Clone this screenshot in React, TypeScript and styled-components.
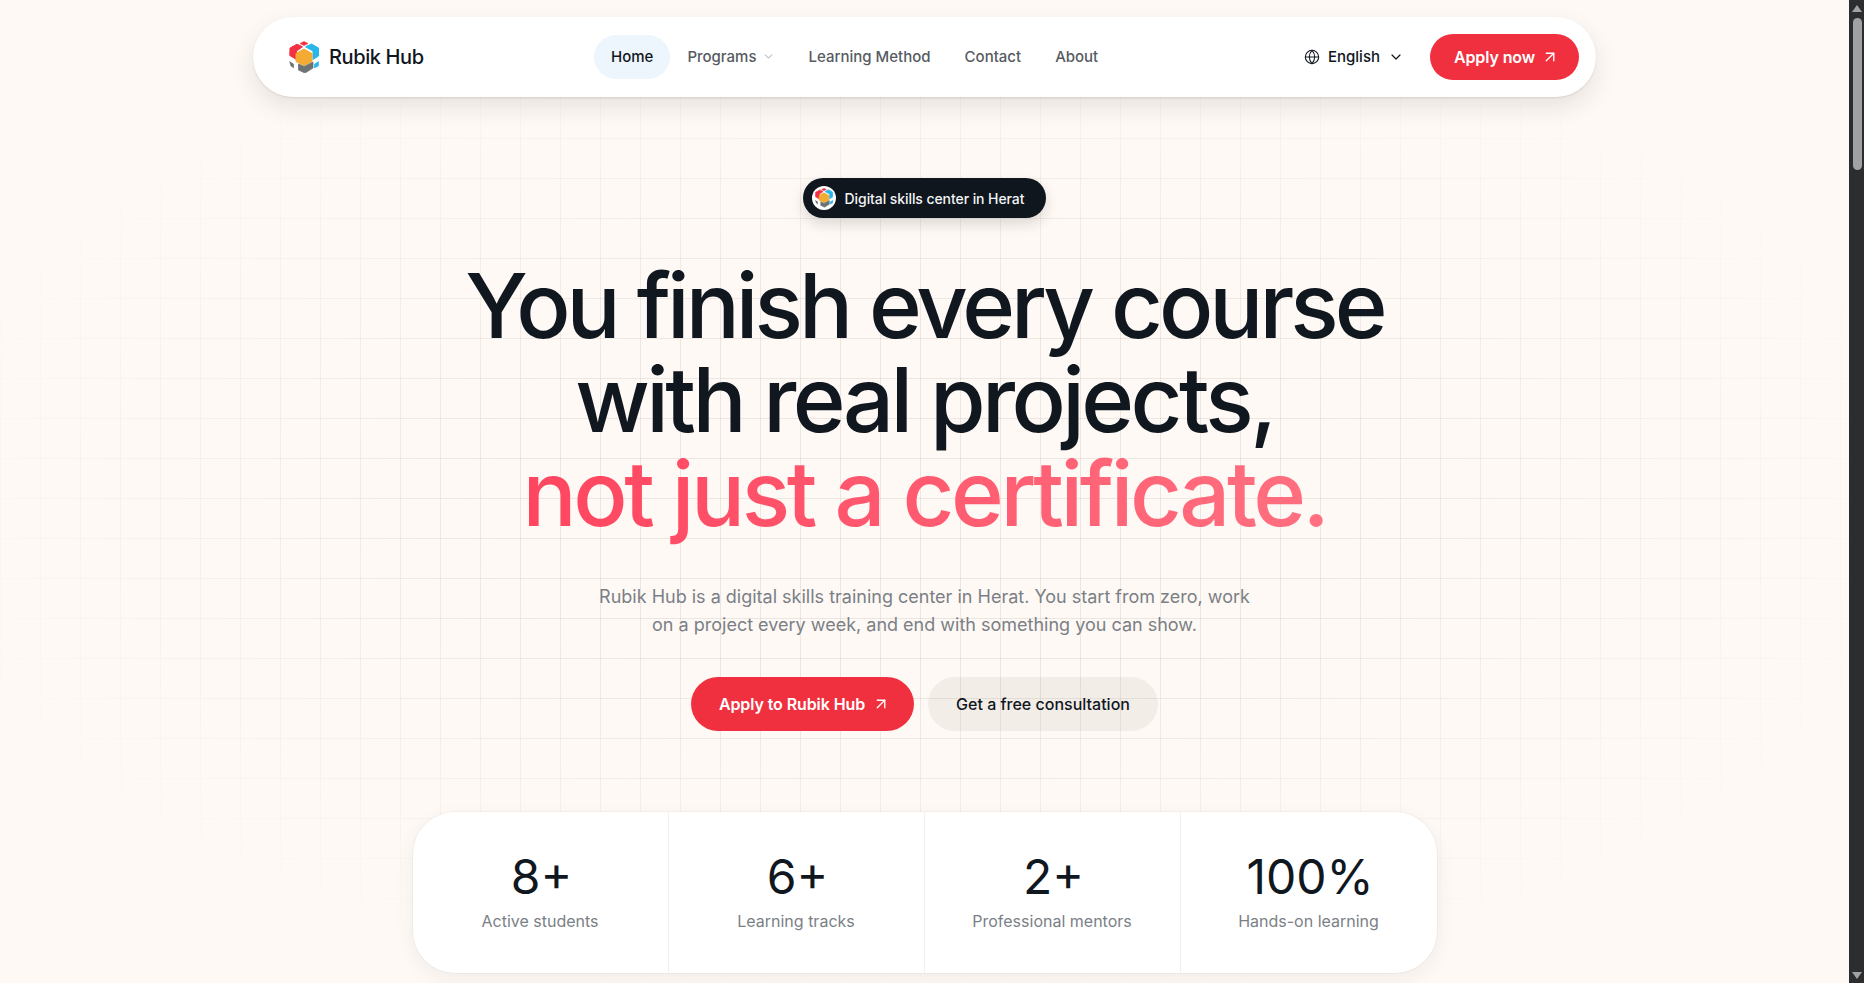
import React from "react";
import styled, { createGlobalStyle } from "styled-components";
import { ArrowUpRight, ChevronDown, Globe } from "lucide-react";

const Global = createGlobalStyle`
  html, body { margin: 0; padding: 0; height: 983px; overflow: hidden; background: #fef9f5; }
  * { box-sizing: border-box; }
  body { font-family: Inter, "Noto Sans", "Liberation Sans", sans-serif; }
`;

const Shell = styled.div`
  display: flex;
  width: 1864px;
  height: 983px;
  overflow: hidden;
`;

const Page = styled.main`
  position: relative;
  flex: 1;
  display: flex;
  flex-direction: column;
  align-items: center;
  padding-top: 17px;
  overflow: hidden;
  background: #fef9f5;
  &::before {
    content: "";
    position: absolute;
    left: 0;
    right: 0;
    top: 18px;
    height: 960px;
    background-image:
      linear-gradient(to right, rgba(60, 50, 45, 0.09) 1px, transparent 1px),
      linear-gradient(to bottom, rgba(60, 50, 45, 0.09) 1px, transparent 1px);
    background-size: 40px 40px;
    -webkit-mask-image: radial-gradient(ellipse 56% 54% at 50% 50%, #000 38%, transparent 100%);
    mask-image: radial-gradient(ellipse 56% 54% at 50% 50%, #000 38%, transparent 100%);
  }
  & > * { position: relative; }
`;

const Scrollbar = styled.aside`
  width: 15px;
  flex: none;
  background: #2c2d2f;
  display: flex;
  flex-direction: column;
  align-items: center;
  padding: 5px 0 4px 1px;
`;

const Arrow = styled.div<{ $down?: boolean }>`
  width: 0;
  height: 0;
  border-left: 5px solid transparent;
  border-right: 5px solid transparent;
  ${(p) => (p.$down ? "border-top: 7px solid #a0a2a4;" : "border-bottom: 7px solid #a0a2a4;")}
`;

const Thumb = styled.div`
  width: 9px;
  height: 152px;
  margin-top: 6px;
  border-radius: 5px;
  background: #a0a2a4;
`;

const Spacer = styled.div`
  flex: 1;
`;

const NavBar = styled.header`
  width: 1343px;
  height: 80px;
  flex: none;
  display: flex;
  align-items: center;
  padding: 0 17px 0 36px;
  background: #fff;
  border-radius: 40px;
  box-shadow: 0 1px 2px rgba(40, 30, 20, 0.1), 0 10px 24px rgba(40, 30, 20, 0.1);
`;

const Brand = styled.div`
  display: flex;
  align-items: center;
  gap: 10px;
  width: 133px;
  font-size: 20px;
  font-weight: 500;
  letter-spacing: -0.4px;
  white-space: nowrap;
  color: #10161d;
  svg { flex: none; }
`;

const Links = styled.nav`
  display: flex;
  align-items: center;
  margin-left: 172px;
`;

const NavLink = styled.a<{ $active?: boolean }>`
  display: flex;
  align-items: center;
  gap: 5px;
  height: 44px;
  padding: 0 17px 2px;
  border-radius: 22px;
  font-size: 15px;
  font-weight: 500;
  white-space: nowrap;
  color: ${(p) => (p.$active ? "#10161d" : "#565b62")};
  background: ${(p) => (p.$active ? "#edf6fc" : "transparent")};
`;

const RightGroup = styled.div`
  margin-left: auto;
  display: flex;
  align-items: center;
`;

const Language = styled.div`
  display: flex;
  align-items: center;
  gap: 8px;
  margin-right: 26px;
  padding-bottom: 1px;
  font-size: 15px;
  font-weight: 500;
  color: #10161d;
`;

const PrimaryButton = styled.a<{ $large?: boolean }>`
  display: flex;
  align-items: center;
  justify-content: center;
  gap: ${(p) => (p.$large ? "7px" : "6px")};
  width: ${(p) => (p.$large ? "223px" : "149px")};
  height: ${(p) => (p.$large ? "54px" : "46px")};
  padding-left: 4px;
  border-radius: 27px;
  background: #f1303f;
  color: #fff;
  font-size: 16px;
  font-weight: 600;
  letter-spacing: -0.1px;
  white-space: nowrap;
`;

const Badge = styled.div`
  display: flex;
  align-items: center;
  gap: 9px;
  flex: none;
  height: 40px;
  margin-top: 81px;
  padding: 0 22px 0 9px;
  border-radius: 20px;
  background: #0f161e;
  color: #f3f4f5;
  font-size: 14px;
  font-weight: 500;
  letter-spacing: -0.08px;
  box-shadow: 0 6px 14px rgba(20, 20, 20, 0.14);
`;

const BadgeLogo = styled.span`
  width: 24px;
  height: 24px;
  border-radius: 50%;
  background: #fff;
  display: flex;
  align-items: center;
  justify-content: center;
`;

const Heading = styled.h1`
  margin: 41px 0 0;
  font-size: 90px;
  line-height: 94px;
  font-weight: 500;
  letter-spacing: -0.0445em;
  text-align: center;
  color: #10171f;
  white-space: nowrap;
`;

const Line = styled.span`
  letter-spacing: -0.04em;
`;

const Accent = styled.span`
  display: inline-block;
  padding-bottom: 16px;
  margin-bottom: -16px;
  letter-spacing: -0.0385em;
  background: linear-gradient(90deg, #ff4560, #ff7080);
  -webkit-background-clip: text;
  background-clip: text;
  color: transparent;
`;

const Lead = styled.p`
  margin: 42px 0 0;
  width: 665px;
  font-size: 18px;
  line-height: 28px;
  text-align: center;
  color: #7b7f86;
`;

const Actions = styled.div`
  display: flex;
  gap: 14px;
  margin-top: 38px;
`;

const GhostButton = styled.a`
  display: flex;
  align-items: center;
  justify-content: center;
  width: 230px;
  height: 54px;
  border-radius: 27px;
  background: rgba(60, 50, 40, 0.06);
  color: #10171f;
  font-size: 16px;
  font-weight: 500;
`;

const Stats = styled.section`
  display: grid;
  grid-template-columns: repeat(4, 1fr);
  flex: none;
  width: 1024px;
  height: 161px;
  margin-top: 81px;
  background: #fff;
  border-radius: 42px;
  box-shadow: 0 0 0 1px rgba(40, 30, 20, 0.03), 0 6px 20px rgba(40, 30, 20, 0.06);
`;

const Stat = styled.div`
  display: flex;
  flex-direction: column;
  align-items: center;
  padding-top: 36px;
  &:not(:last-child) { border-right: 1px solid #f2f0ee; }
`;

const StatValue = styled.div`
  padding-left: 3px;
  font-size: 48px;
  line-height: 58px;
  font-weight: 430;
  color: #10171f;
`;

const StatLabel = styled.div`
  margin-top: 3px;
  font-size: 16px;
  line-height: 24px;
  color: #7b7f86;
`;

const Logo = ({ size }: { size: number }) => (
  <svg width={size} height={size * 32 / 30} viewBox="0 0 30 32" strokeLinejoin="round">
    <path d="M15 .5l4 2-4 2-4-2z" fill="#f23043" stroke="#f23043" strokeWidth=".6" />
    <path d="M1 7L8 3.2 13.5 5.8 7.5 10v8.5L.8 14.5z" fill="#f23043" stroke="#f23043" strokeWidth="1" />
    <path d="M16.5 5.8L22.5 3 29.5 7v8L24 18.5V10z" fill="#29b6ea" stroke="#29b6ea" strokeWidth="1" />
    <path d="M15 8l8 4.5v8L15 24.5 7 20.5v-8z" fill="#f3ab32" stroke="#f3ab32" strokeWidth="1" />
    <path d="M9.5 23l5.5 2.5 9-4.5v6l-8 5-6.5-3z" fill="#6c7373" stroke="#6c7373" strokeWidth=".8" />
    <path d="M.2 20l4.6 3v4.2L1.6 25z" fill="#6c7373" />
    <path d="M29.8 20v5l-4.6 2.4V23z" fill="#29b6ea" />
  </svg>
);

const stats = [
  ["8+", "Active students"],
  ["6+", "Learning tracks"],
  ["2+", "Professional mentors"],
  ["100%", "Hands-on learning"],
];

export default function App() {
  return (
    <Shell>
      <Global />
      <Page>
        <NavBar>
          <Brand>
            <Logo size={30} />
            Rubik Hub
          </Brand>
          <Links>
            <NavLink $active>Home</NavLink>
            <NavLink>
              Programs <ChevronDown size={13} strokeWidth={1.5} color="#8a8e94" />
            </NavLink>
            <NavLink>Learning Method</NavLink>
            <NavLink>Contact</NavLink>
            <NavLink>About</NavLink>
          </Links>
          <RightGroup>
            <Language>
              <Globe size={16} strokeWidth={1.6} />
              English
              <ChevronDown size={16} strokeWidth={1.8} />
            </Language>
            <PrimaryButton>
              Apply now <ArrowUpRight size={18} strokeWidth={1.8} />
            </PrimaryButton>
          </RightGroup>
        </NavBar>
        <Badge>
          <BadgeLogo>
            <Logo size={18} />
          </BadgeLogo>
          Digital skills center in Herat
        </Badge>
        <Heading>
          You finish every course
          <br />
          <Line>with real projects,</Line>
          <br />
          <Accent>not just a certificate.</Accent>
        </Heading>
        <Lead>
          Rubik Hub is a digital skills training center in Herat. You start from zero, work on a project every week, and end with something you can show.
        </Lead>
        <Actions>
          <PrimaryButton $large>
            Apply to Rubik Hub <ArrowUpRight size={18} strokeWidth={1.8} />
          </PrimaryButton>
          <GhostButton>Get a free consultation</GhostButton>
        </Actions>
        <Stats>
          {stats.map(([value, label]) => (
            <Stat key={label}>
              <StatValue>{value}</StatValue>
              <StatLabel>{label}</StatLabel>
            </Stat>
          ))}
        </Stats>
      </Page>
      <Scrollbar>
        <Arrow />
        <Thumb />
        <Spacer />
        <Arrow $down />
      </Scrollbar>
    </Shell>
  );
}
